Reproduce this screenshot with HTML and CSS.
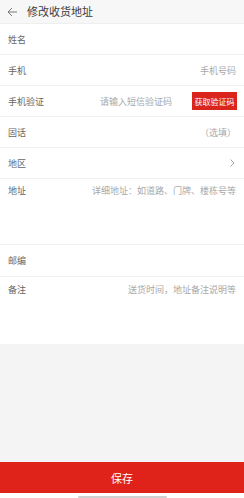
FILE: index.html
```html
<!DOCTYPE html>
<html lang="zh">
<head>
<meta charset="utf-8">
<title>修改收货地址</title>
<link rel="stylesheet" href="styles.css">
</head>
<body>
<div class="page">
  <header class="topbar">
    <svg class="back" width="10" height="10" viewBox="0 0 10 10"><path d="M5 1 L1 5 L5 9 M1 5 H10" fill="none" stroke="#777" stroke-width="1"/></svg>
    <span class="title">修改收货地址</span>
  </header>
  <div class="form">
    <div class="row"><span class="label">姓名</span></div>
    <div class="row"><span class="label">手机</span><span class="ph">手机号码</span></div>
    <div class="row"><span class="label">手机验证</span><span class="ph code-ph">请输入短信验证码</span><span class="code-btn">获取验证码</span></div>
    <div class="row"><span class="label">固话</span><span class="ph">（选填）</span></div>
    <div class="row"><span class="label">地区</span><svg class="chev" width="5" height="8" viewBox="0 0 5 8"><path d="M0.5 0.5 L4 4 L0.5 7.5" fill="none" stroke="#999" stroke-width="0.9"/></svg></div>
    <div class="row tall addr"><span class="label">地址</span><span class="ph">详细地址：如道路、门牌、楼栋号等</span></div>
    <div class="row zip"><span class="label">邮编</span></div>
    <div class="row tall note"><span class="label">备注</span><span class="ph">送货时间，地址备注说明等</span></div>
  </div>
  <div class="fill"></div>
  <div class="save">保存</div>
  <div class="bottom"><div class="indicator"></div></div>
</div>
</body>
</html>
```
FILE: styles.css
```css
html, body {
  margin: 0;
  padding: 0;
  background: #fff;
}
body {
  font-family: "Noto Sans CJK SC", "Noto Sans", sans-serif;
  width: 244px;
  height: 498px;
  overflow: hidden;
}
.page {
  display: flex;
  flex-direction: column;
  height: 498px;
}
.topbar {
  height: 23px;
  background: #f7f7f7;
  display: flex;
  align-items: center;
  padding-left: 7px;
  border-bottom: 1px solid #efefef;
  flex: none;
}
.back {
  display: block;
  margin-right: 10px;
}
.title {
  font-size: 11px;
  color: #3c3c3c;
  line-height: 13px;
}
.form {
  background: #fff;
  flex: none;
}
.row {
  height: 30px;
  border-bottom: 1px solid #f0f0f0;
  display: flex;
  align-items: center;
  padding: 0 8px;
  font-size: 9px;
  line-height: 13px;
}
.label {
  color: #666;
  flex: 1;
}
.ph {
  color: #a8a8a8;
}
.code-ph {
  margin-right: 20px;
}
.code-btn {
  background: #d9251c;
  color: #fff;
  font-size: 8px;
  height: 18px;
  width: 45px;
  display: flex;
  align-items: center;
  justify-content: center;
  margin-right: -1px;
}
.chev {
  display: block;
  margin-right: 1px;
}
.tall {
  align-items: flex-start;
}
.addr {
  height: 60px;
  padding-top: 5px;
}
.zip {
  height: 31px;
}
.note {
  height: 61px;
  padding-top: 6px;
  border-bottom: none;
}
.fill {
  flex: 1;
  background: #f4f4f4;
}
.save {
  height: 31px;
  background: #e0231a;
  color: #fff;
  font-size: 11px;
  display: flex;
  align-items: center;
  justify-content: center;
  flex: none;
}
.bottom {
  height: 5px;
  background: #fff;
  display: flex;
  justify-content: center;
  align-items: flex-end;
  flex: none;
}
.indicator {
  width: 89px;
  height: 2px;
  background: #d0d0d0;
  border-radius: 1px;
}
```
